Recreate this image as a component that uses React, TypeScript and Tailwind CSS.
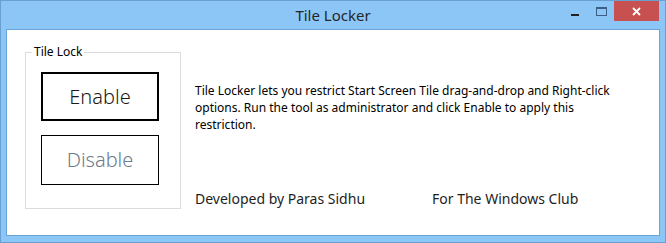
import type { JSX } from 'react'

const font = { fontFamily: '"Noto Sans", "Open Sans", sans-serif' }

function TitleBar(): JSX.Element {
  return (
    <div className="relative flex h-[28px] items-center justify-center">
      <span className="text-[15px] leading-none text-[#262626]">Tile Locker</span>
      <div className="absolute right-[6px] top-0 flex h-[20px] items-stretch">
        <div className="flex w-[26px] items-center justify-center">
          <div className="mt-[7px] h-[2px] w-[8px] bg-[#222]" />
        </div>
        <div className="flex w-[26px] items-center justify-center">
          <div className="mt-[1px] h-[9px] w-[11px] border border-t-2 border-[#3d5e86]" />
        </div>
        <div className="flex w-[45px] items-center justify-center bg-[#c75050]">
          <svg width="9" height="9" viewBox="0 0 9 9">
            <path d="M1 1L8 8M8 1L1 8" stroke="#fff" strokeWidth="1.8" />
          </svg>
        </div>
      </div>
    </div>
  )
}

export default function App(): JSX.Element {
  return (
    <div
      className="flex h-[243px] w-[666px] flex-col border border-[#6a9fd2] bg-[#8cc6f7]"
      style={font}
    >
      <TitleBar />
      <div className="mx-[5px] flex h-[207px] border border-[#6aa3d6] bg-white">
        <div className="ml-[18px] mt-[22px] flex h-[157px] w-[156px] flex-col border border-[#dcdcdc]">
          <div className="-mt-[8px] ml-[6px] self-start bg-white px-[2px] text-[12px] leading-[14px] text-black">
            Tile Lock
          </div>
          <button className="ml-[15px] mt-[13px] flex h-[49px] w-[118px] items-center justify-center border-2 border-black text-[20px] font-light text-[#1a1a1a]">
            Enable
          </button>
          <button className="ml-[15px] mt-[14px] flex h-[50px] w-[118px] items-center justify-center border border-black text-[20px] font-light text-[#6d7b8c]">
            Disable
          </button>
        </div>
        <div className="ml-[14px] flex flex-1 flex-col">
          <p className="mt-[52px] text-[12px] leading-[17px] text-black">
            Tile Locker lets you restrict Start Screen Tile drag-and-drop and Right-click
            <br />
            options. Run the tool as administrator and click Enable to apply this
            <br />
            restriction.
          </p>
          <div className="mt-[57px] flex text-[14px] leading-[18px] text-[#1e1e1e]">
            <span className="w-[237px]">Developed by Paras Sidhu</span>
            <span>For The Windows Club</span>
          </div>
        </div>
      </div>
    </div>
  )
}
